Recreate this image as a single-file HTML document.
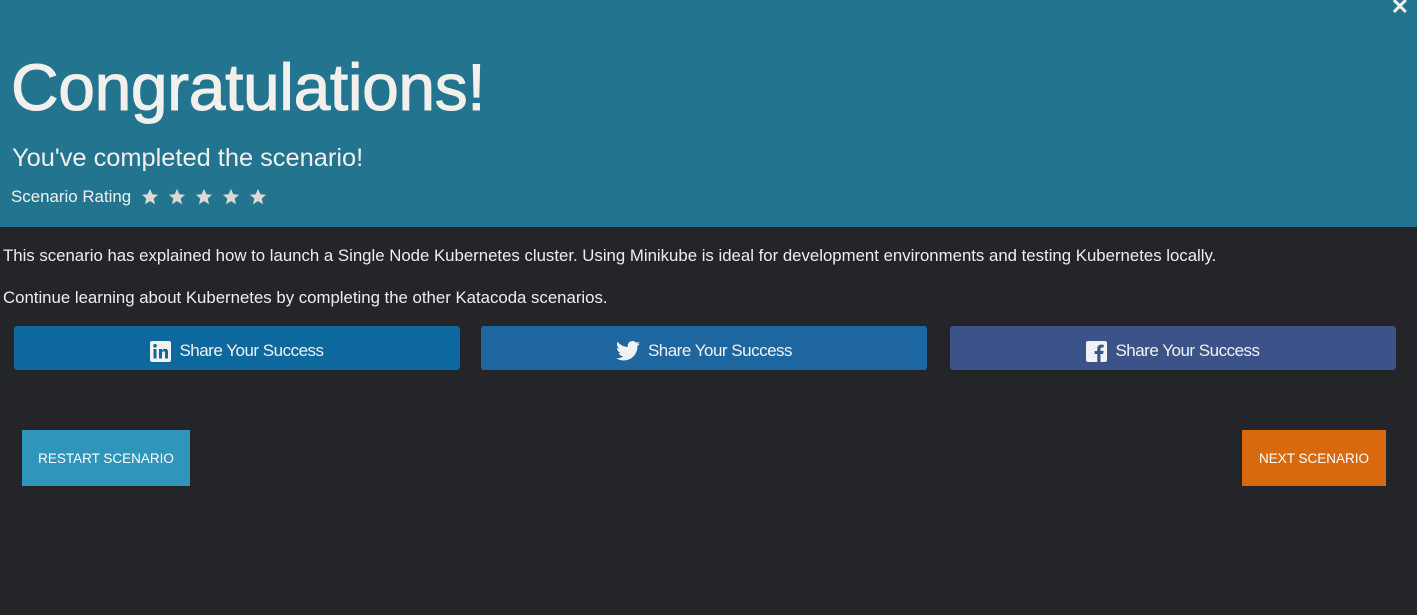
<!DOCTYPE html>
<html><head><meta charset="utf-8"><style>
*{margin:0;padding:0;box-sizing:border-box}
body{width:1417px;height:615px;background:#242528;font-family:"Liberation Sans",sans-serif;color:#eee;overflow:hidden;position:relative}
.hd{position:absolute;left:0;top:0;width:1417px;height:227px;background:#23758f}
.close{position:absolute;right:8px;top:-6px;font-size:22px;color:#f3f0eb;font-weight:bold}
h1{position:absolute;left:11px;top:49px;font-size:66px;font-weight:normal;color:#f2f0ec;letter-spacing:-0.4px;-webkit-text-stroke:1px #f2f0ec}
.sub{position:absolute;left:12px;top:144px;font-size:25.4px;color:#f2f0ec}
.rate{position:absolute;left:11px;top:187px;font-size:16.9px;color:#f2f0ec}
.star{position:absolute;top:188px;width:18px;height:18px}
p{position:absolute;left:3px;font-size:16.8px;color:#eee}
.sh{position:absolute;top:326px;width:446px;height:44px;border-radius:3px;color:#f2f2f2;font-size:17px;display:flex;align-items:center;justify-content:center;gap:8px;letter-spacing:-0.5px;padding-top:6px}
.btn{position:absolute;top:430px;height:56px;color:#fff;font-size:13.5px;display:flex;align-items:center;justify-content:center}
</style></head><body>
<div class="hd"><div class="close">✕</div>
<h1>Congratulations!</h1>
<div class="sub">You've completed the scenario!</div>
<div class="rate">Scenario Rating</div>
<svg class="star" style="left:141px" viewBox="0 0 20 20"><path d="M10 1l2.6 6 6.4.5-4.9 4.2 1.5 6.3L10 14.6 4.4 18l1.5-6.3L1 7.5 7.4 7z" fill="#ddd9d2"/></svg>
<svg class="star" style="left:168px" viewBox="0 0 20 20"><path d="M10 1l2.6 6 6.4.5-4.9 4.2 1.5 6.3L10 14.6 4.4 18l1.5-6.3L1 7.5 7.4 7z" fill="#ddd9d2"/></svg>
<svg class="star" style="left:195px" viewBox="0 0 20 20"><path d="M10 1l2.6 6 6.4.5-4.9 4.2 1.5 6.3L10 14.6 4.4 18l1.5-6.3L1 7.5 7.4 7z" fill="#ddd9d2"/></svg>
<svg class="star" style="left:222px" viewBox="0 0 20 20"><path d="M10 1l2.6 6 6.4.5-4.9 4.2 1.5 6.3L10 14.6 4.4 18l1.5-6.3L1 7.5 7.4 7z" fill="#ddd9d2"/></svg>
<svg class="star" style="left:249px" viewBox="0 0 20 20"><path d="M10 1l2.6 6 6.4.5-4.9 4.2 1.5 6.3L10 14.6 4.4 18l1.5-6.3L1 7.5 7.4 7z" fill="#ddd9d2"/></svg>
</div>
<p style="top:246px">This scenario has explained how to launch a Single Node Kubernetes cluster. Using Minikube is ideal for development environments and testing Kubernetes locally.</p>
<p style="top:288px">Continue learning about Kubernetes by completing the other Katacoda scenarios.</p>
<div class="sh" style="left:14px;background:#0d689d"><svg width="21" height="21" viewBox="0 0 21 21"><rect width="21" height="21" rx="2" fill="#f2f2f2"/><rect x="3.5" y="8" width="3" height="9.5" fill="#0d689d"/><circle cx="5" cy="4.8" r="1.8" fill="#0d689d"/><path d="M9 8h3v1.5c.6-1 1.7-1.8 3.2-1.8 2.3 0 2.8 1.5 2.8 3.6v6.2h-3v-5.5c0-1-.2-1.8-1.3-1.8s-1.7.8-1.7 1.8v5.5H9z" fill="#0d689d"/></svg>Share Your Success</div>
<div class="sh" style="left:481px;background:#1e66a0"><svg width="24" height="20" viewBox="0 0 24 20"><path d="M24 2.4c-.9.4-1.8.6-2.8.8 1-.6 1.8-1.6 2.2-2.7-1 .6-2 1-3.1 1.2C19.4.7 18.1 0 16.6 0c-2.7 0-4.9 2.2-4.9 4.9 0 .4 0 .8.1 1.1C7.7 5.8 4.1 3.9 1.7.9c-.4.7-.7 1.6-.7 2.5 0 1.7.9 3.2 2.2 4.1-.8 0-1.6-.2-2.2-.6v.1c0 2.4 1.7 4.4 3.9 4.8-.4.1-.8.2-1.3.2-.3 0-.6 0-.9-.1.6 2 2.4 3.4 4.6 3.4-1.7 1.3-3.8 2.1-6.1 2.1-.4 0-.8 0-1.2-.1 2.2 1.4 4.8 2.2 7.5 2.2 9.1 0 14-7.5 14-14v-.6c1-.7 1.8-1.6 2.5-2.5z" fill="#f2f2f2"/></svg>Share Your Success</div>
<div class="sh" style="left:950px;background:#3b5388"><svg width="21" height="21" viewBox="0 0 21 21"><rect width="21" height="21" rx="2" fill="#f2f2f2"/><path d="M14.5 21v-8h2.7l.4-3.1h-3.1V8c0-.9.3-1.5 1.6-1.5h1.6V3.7c-.3 0-1.3-.1-2.4-.1-2.4 0-4 1.4-4 4.1v2.3H8.6V13h2.7v8z" fill="#3b5388"/></svg>Share Your Success</div>
<div class="btn" style="left:22px;width:168px;background:#2f95bb">RESTART SCENARIO</div>
<div class="btn" style="left:1242px;width:144px;background:#d9690e">NEXT SCENARIO</div>
</body></html>
